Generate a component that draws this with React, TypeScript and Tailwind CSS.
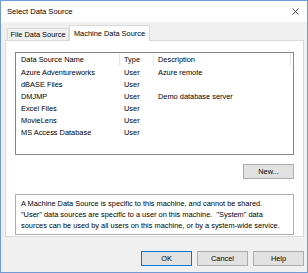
import React from 'react';

const rows = [
  { name: 'Azure Adventureworks', type: 'User', description: 'Azure remote' },
  { name: 'dBASE Files', type: 'User', description: '' },
  { name: 'DMJMP', type: 'User', description: 'Demo database server' },
  { name: 'Excel Files', type: 'User', description: '' },
  { name: 'MovieLens', type: 'User', description: '' },
  { name: 'MS Access Database', type: 'User', description: '' },
];

const infoLines = [
  'A Machine Data Source is specific to this machine, and cannot be shared.',
  '"User" data sources are specific to a user on this machine.  "System" data',
  'sources can be used by all users on this machine, or by a system-wide service.',
];

const DialogButton: React.FC<{ label: string; primary?: boolean }> = ({ label, primary }) => (
  <button
    className={
      primary
        ? 'w-[51px] h-[15px] flex items-center justify-center bg-[#E1E1E1] border border-[#0078D7] text-black'
        : 'w-[51px] h-[15px] flex items-center justify-center bg-[#E1E1E1] border border-[#ADADAD] text-black'
    }
  >
    {label}
  </button>
);

export default function App() {
  return (
    <div className="w-[308px] h-[273px] flex flex-col border border-[#6F9DD3] bg-[#F0F0F0] text-[7.4px] leading-none text-black font-['Liberation_Sans',Arial,sans-serif] overflow-hidden">
      {/* title bar */}
      <div className="h-[21px] bg-white flex items-center justify-between pl-[6px] pr-[8px]">
        <span className="text-[7.6px]">Select Data Source</span>
        <svg width="7" height="7" viewBox="0 0 7 7" className="text-[#222]">
          <path d="M0.5 0.5 L6.5 6.5 M6.5 0.5 L0.5 6.5" stroke="currentColor" strokeWidth="0.8" fill="none" />
        </svg>
      </div>

      <div className="flex-1 flex flex-col pl-[4px] pr-[3px] pt-[3px]">
        {/* tabs */}
        <div className="flex items-end h-[15px] pl-[2px]">
          <div className="h-[12px] w-[62px] flex items-center justify-center border border-b-0 border-[#D9D9D9] bg-[#F0F0F0]">
            File Data Source
          </div>
          <div className="h-[16px] w-[81px] -mb-[1px] relative z-10 flex items-center justify-center border border-b-0 border-[#D9D9D9] bg-white">
            Machine Data Source
          </div>
        </div>

        {/* tab page */}
        <div className="h-[197px] flex flex-col border border-[#D9D9D9] bg-white pl-[9px] pr-[9px] pt-[11px]">
          <div className="h-[103px] border border-[#828790] bg-white flex flex-col">
            <div className="h-[13px] flex">
              <div className="w-[104px] pl-[5px] flex items-center border-r border-[#E5E5E5]">Data Source Name</div>
              <div className="w-[34px] pl-[4px] flex items-center border-r border-[#E5E5E5]">Type</div>
              <div className="w-[137px] pl-[4px] flex items-center border-r border-[#E5E5E5]">Description</div>
            </div>
            <div className="pt-[1px] flex flex-col">
              {rows.map((row) => (
                <div key={row.name} className="h-[12px] flex items-center">
                  <div className="w-[104px] pl-[5px]">{row.name}</div>
                  <div className="w-[34px] pl-[4px]">{row.type}</div>
                  <div className="w-[137px] pl-[4px]">{row.description}</div>
                </div>
              ))}
            </div>
          </div>

          <div className="flex justify-end mt-[9px]">
            <button className="w-[51px] h-[15px] flex items-center justify-center bg-[#E1E1E1] border border-[#ADADAD]">
              New...
            </button>
          </div>

          <div className="mt-[15px] h-[41px] border border-[#ADADAD] bg-white pl-[5px] pt-[5px] flex flex-col gap-[3px]">
            {infoLines.map((line) => (
              <div key={line} className="h-[8px] whitespace-pre">
                {line}
              </div>
            ))}
          </div>
        </div>

        {/* dialog buttons */}
        <div className="flex justify-end gap-[5px] mt-[14px]">
          <DialogButton label="OK" primary />
          <DialogButton label="Cancel" />
          <DialogButton label="Help" />
        </div>
      </div>
    </div>
  );
}
